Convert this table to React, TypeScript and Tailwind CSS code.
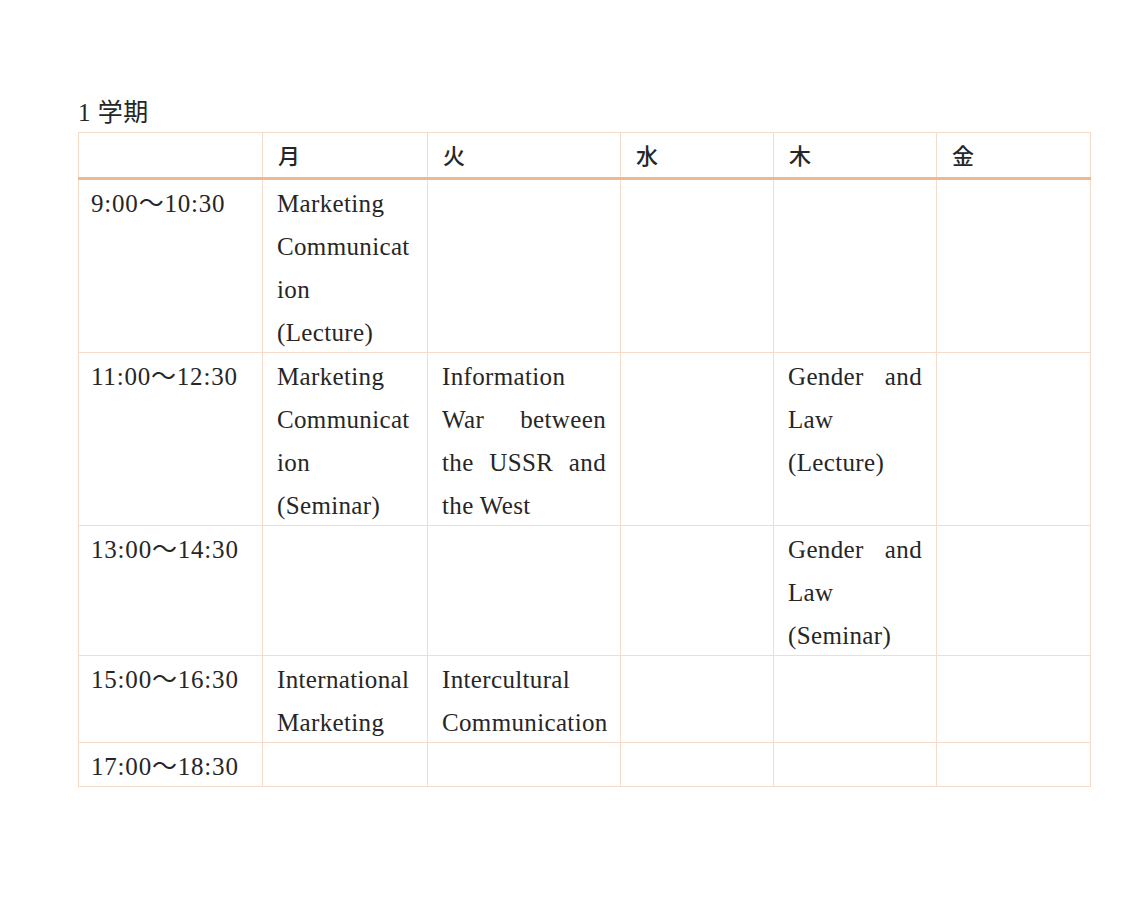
import React from "react";

type Line = string | string[];
type Cell = Line[];

const cols = [184, 165, 193, 153, 163, 154];
const days = ["月", "火", "水", "木", "金"];

const rows: { time: string; cells: Cell[] }[] = [
  {
    time: "9:00～10:30",
    cells: [["Marketing", "Communicat", "ion", "(Lecture)"], [], [], [], []],
  },
  {
    time: "11:00～12:30",
    cells: [
      ["Marketing", "Communicat", "ion", "(Seminar)"],
      ["Information", ["War", "between"], ["the", "USSR", "and"], "the West"],
      [],
      [["Gender", "and"], "Law", "(Lecture)"],
      [],
    ],
  },
  {
    time: "13:00～14:30",
    cells: [[], [], [], [["Gender", "and"], "Law", "(Seminar)"], []],
  },
  {
    time: "15:00～16:30",
    cells: [["International", "Marketing"], ["Intercultural", "Communication"], [], [], []],
  },
  { time: "17:00～18:30", cells: [[], [], [], [], []] },
];

const font = {
  fontFamily: '"Liberation Serif", "Noto Sans CJK JP", serif',
};

function CellLines({ lines }: { lines: Cell }) {
  return (
    <div className="translate-y-[2px]">
      {lines.map((l, i) =>
        Array.isArray(l) ? (
          <div key={i} className="flex justify-between whitespace-nowrap">
            {l.map((w, j) => (
              <span key={j}>{w}</span>
            ))}
          </div>
        ) : (
          <div key={i} className="whitespace-nowrap">
            {l}
          </div>
        )
      )}
    </div>
  );
}

export default function App() {
  return (
    <div className="min-h-[902px] w-[1125px] bg-white text-[#262626]" style={font}>
      <div className="pl-[78px] pt-[97px]">
        <div className="text-[25px] leading-[32px] tracking-[0.5px] mb-[3px]">1 学期</div>
        <table className="table-fixed border-collapse w-[1013px]">
          <colgroup>
            {cols.map((w, i) => (
              <col key={i} style={{ width: w }} />
            ))}
          </colgroup>
          <thead>
            <tr className="h-[46px]">
              <th className="border border-[#f6dbc9] border-b-[3px] border-b-[#eeb893]"></th>
              {days.map((d) => (
                <th
                  key={d}
                  className="border border-[#f6dbc9] border-b-[3px] border-b-[#eeb893] text-left align-middle pl-[15px] pb-[3px] text-[22px] font-medium leading-[22px]"
                  style={{ fontFamily: '"Noto Sans CJK JP", sans-serif' }}
                >
                  {d}
                </th>
              ))}
            </tr>
          </thead>
          <tbody>
            {rows.map((r, ri) => (
              <tr key={ri}>
                <td className="border border-[#f6dbc9] align-top pl-[12px] pr-[8px] text-[25px] leading-[43px] tracking-[0.8px] whitespace-nowrap">
                  <div className="translate-y-[2px]">{r.time}</div>
                </td>
                {r.cells.map((c, ci) => (
                  <td
                    key={ci}
                    className="border border-[#f6dbc9] align-top pl-[14px] pr-[14px] text-[25px] leading-[43px] tracking-[0.35px]"
                  >
                    <CellLines lines={c} />
                  </td>
                ))}
              </tr>
            ))}
          </tbody>
        </table>
      </div>
    </div>
  );
}
